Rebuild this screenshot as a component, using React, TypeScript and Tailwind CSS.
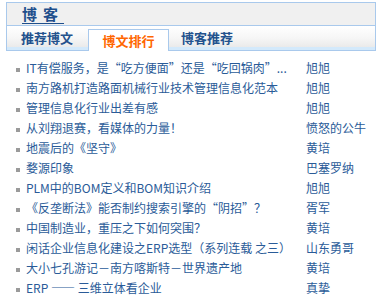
import React from "react";

const rows: [string, string][] = [
  ["IT有偿服务，是“吃方便面”还是“吃回锅肉”...", "旭旭"],
  ["南方路机打造路面机械行业技术管理信息化范本", "旭旭"],
  ["管理信息化行业出差有感", "旭旭"],
  ["从刘翔退赛，看媒体的力量！", "愤怒的公牛"],
  ["地震后的《坚守》", "黄培"],
  ["婺源印象", "巴塞罗纳"],
  ["PLM中的BOM定义和BOM知识介绍", "旭旭"],
  ["《反垄断法》能否制约搜索引擎的“阴招”？", "胥军"],
  ["中国制造业，重压之下如何突围？", "黄培"],
  ["闲话企业信息化建设之ERP选型（系列连载 之三）", "山东勇哥"],
  ["大小七孔游记－南方喀斯特－世界遗产地", "黄培"],
  ["ERP —— 三维立体看企业", "真挚"],
];

export default function App() {
  return (
    <div
      className="w-[382px] h-[305px] bg-white overflow-hidden pt-[2px]"
      style={{ fontFamily: '"Noto Sans CJK SC", "Noto Sans", sans-serif' }}
      lang="zh-CN"
    >
      <div className="ml-[6px] w-[370px] border border-[#a9c9ec]">
        <div className="h-[23px] bg-[#f0f0f0] border-b border-[#a9c9ec] flex items-center pl-[15px]">
          <span className="text-[15px] font-bold text-[#1f4f8c] underline underline-offset-[3px] tracking-[6px] leading-[18px]">
            博客
          </span>
        </div>
        <div className="relative h-[24px] flex items-end bg-gradient-to-b from-[#ffffff] via-[#f6f6f6] to-[#e6e6e6]">
          <div className="absolute left-0 right-0 bottom-0 h-[3px] bg-[#d3e9fb]" />
          <div className="relative w-[81px] h-full flex items-center pl-[14px] text-[13px] font-bold text-[#23528d] leading-[16px]">
            推荐博文
          </div>
          <div className="relative z-10 w-[81px] h-[22px] mb-[-1px] bg-white border border-b-0 border-[#a9c9ec] flex items-center justify-center text-[13px] font-bold text-[#ff6600] leading-[16px]">
            博文排行
          </div>
          <div className="relative h-full flex items-center pl-[12px] text-[13px] font-bold text-[#23528d] leading-[16px]">
            博客推荐
          </div>
        </div>
      </div>
      <div className="pt-[7px]">
        {rows.map(([t, a], i) => (
          <div key={i} className="h-[20px] flex items-center text-[12px] text-[#2a5b98] leading-[16px]">
            <div className="w-[4px] h-[4px] bg-[#9a9a9a] ml-[16px] mr-[6px] mt-[3px] shrink-0" />
            <div className="w-[280px] shrink-0 whitespace-nowrap">{t}</div>
            <div className="whitespace-nowrap">{a}</div>
          </div>
        ))}
      </div>
    </div>
  );
}
